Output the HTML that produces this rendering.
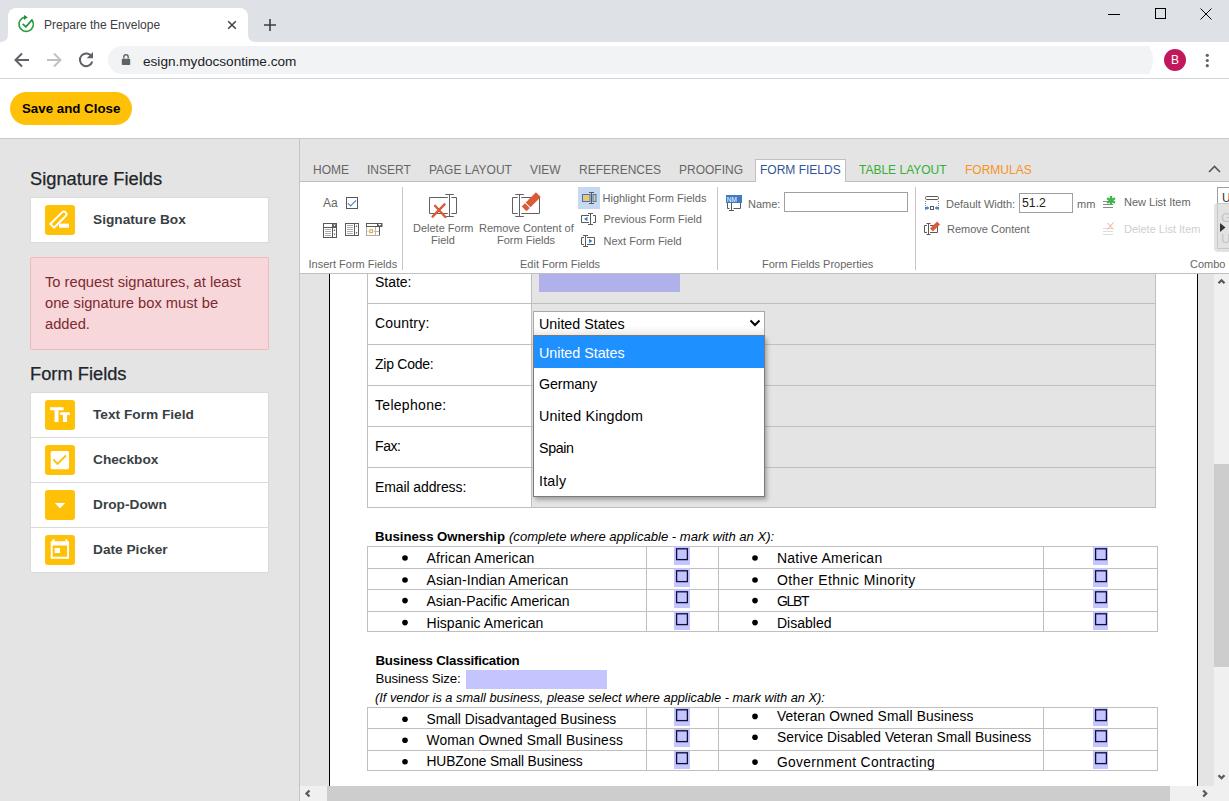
<!DOCTYPE html>
<html><head><meta charset="utf-8">
<style>
*{box-sizing:border-box;margin:0;padding:0}
html,body{width:1229px;height:801px;overflow:hidden;background:#fff;font-family:"Liberation Sans",sans-serif}
.a{position:absolute}
.t{position:absolute;white-space:nowrap;line-height:1}
/* chrome */
#tabbar{left:0;top:0;width:1229px;height:42px;background:#dee1e6}
#tab{left:8px;top:8px;width:240px;height:34px;background:#fff;border-radius:8px 8px 0 0}
#addr{left:0;top:42px;width:1229px;height:36px;background:#fff}
#pill{left:108px;top:46px;width:1042px;height:28px;background:#f1f3f4;border-radius:14px 0 0 14px}
#sep1{left:0;top:78px;width:1229px;height:1px;background:#d3d5d8}
#hdr{left:0;top:79px;width:1229px;height:59px;background:#fff}
#sep2{left:0;top:138px;width:1229px;height:1px;background:#c8c8c8}
#save{left:10px;top:92px;width:122px;height:33px;background:#ffc107;border-radius:17px;font-weight:bold;font-size:13.3px;color:#000}
/* sidebar */
#side{left:0;top:139px;width:299px;height:662px;background:#e4e4e4}
#sideb{left:299px;top:139px;width:1px;height:662px;background:#c4c4c4}
.h{font-size:18.3px;color:#212529;-webkit-text-stroke:0.25px #212529}
.card{left:30px;width:239px;background:#fff;border:1px solid #dadada}
.item{position:absolute;left:0;width:237px;height:45px;border-top:1px solid #dadada}
.ico{position:absolute;left:14px;top:7px;width:30px;height:30px;background:#ffc107;border-radius:3px}
.lbl{position:absolute;left:62px;top:15px;font-weight:bold;font-size:13.7px;color:#3a3f45;white-space:nowrap;line-height:1}
#alert{left:30px;top:257px;width:239px;height:93px;background:#f8d7da;border:1px solid #f1b8bd;border-radius:2px}
#alert p{position:absolute;left:14px;top:14px;font-size:14.7px;line-height:21px;color:#7b2a30;width:220px}
/* ribbon */
#rtabs{left:300px;top:139px;width:929px;height:43px;background:#e4e4e4;border-bottom:1px solid #c0c0c0}
.rt{position:absolute;top:163px;font-size:12px;color:#666;line-height:1;white-space:nowrap}
#ractive{left:755px;top:159px;width:91px;height:24px;background:#fff;border:1px solid #c0c0c0;border-bottom:none}
#rbody{left:300px;top:182px;width:929px;height:92px;background:#fff;border-bottom:1px solid #c0c0c0}
.vs{position:absolute;top:187px;width:1px;height:83px;background:#c6c6c6}
.rl{position:absolute;font-size:11px;color:#666;line-height:1;white-space:nowrap}
/* doc */
#doc{left:300px;top:274px;width:914px;height:512px;background:#e4e4e4;overflow:hidden}
#page{left:329px;top:274px;width:869px;height:512px;background:#fff;border-left:1px solid #000;border-right:1px solid #000}
#vsb{left:1214px;top:274px;width:15px;height:527px;background:#f0f0f0}
#hsb{left:300px;top:786px;width:914px;height:15px;background:#f0f0f0}
.d{position:absolute;font-size:14px;color:#000;line-height:1;white-space:nowrap}
</style></head><body>
<div id="tabbar" class="a"></div>
<div id="tab" class="a"></div>
<svg class="a" style="left:0;top:0" width="300" height="42">
<path d="M0 42 Q8 42 8 34 L8 42 Z" fill="#fff"/>
<path d="M248 34 Q248 42 256 42 L248 42 Z" fill="#fff"/>
<g fill="none" stroke="#2ea043" stroke-width="1.7" stroke-linecap="round">
<path d="M25 17.1 A7.2 7.2 0 1 0 32.4 20.6"/>
<path d="M23.2 24.4 L25.9 26.8 L31.9 20" stroke="#1f8f3a" stroke-width="1.8"/>
</g>
<path d="M24 14.9 L27.8 17.2 L24 19.9 Z" fill="#1f8f3a"/>
<g stroke="#3c4043" stroke-width="1.5" stroke-linecap="butt">
<path d="M228.2 21.2 L235.8 28.8 M235.8 21.2 L228.2 28.8"/>
<path d="M270 19 L270 31 M264 25 L276 25" stroke-width="1.6"/>
</g>
</svg>
<span class="t" style="left:44px;top:19px;font-size:12px;color:#3c4043">Prepare the Envelope</span>
<svg class="a" style="left:1090px;top:0" width="139" height="42">
<g stroke="#000" stroke-width="1" fill="none">
<path d="M1108 14.5 L1120 14.5" transform="translate(-1090 0)"/>
<rect x="65.5" y="8.5" width="10" height="10" transform="translate(0 0)"/>
<path d="M110.5 8.5 L121.5 19.5 M121.5 8.5 L110.5 19.5"/>
</g>
</svg>
<div id="addr" class="a"></div>
<div id="pill" class="a"></div>
<div class="a" style="left:1146px;top:49px;width:7px;height:22px;background:#f1f3f4;border-radius:0 50% 50% 0/0 50% 50% 0"></div>
<svg class="a" style="left:0;top:42px" width="150" height="36">
<g fill="none" stroke="#5f6368" stroke-width="2" stroke-linecap="butt">
<path d="M29 18 L16 18 M22 11.5 L15.5 18 L22 24.5"/>
<path d="M47 18 L60 18 M54 11.5 L60.5 18 L54 24.5" stroke="#bec1c5"/>
<path d="M91.6 14.5 A6.3 6.3 0 1 0 92.3 19.5"/>
</g>
<path d="M93 10 L93 16.3 L86.7 16.3 Z" fill="#5f6368"/>
<rect x="121.8" y="16.8" width="8.4" height="6.2" rx="0.8" fill="#5f6368"/>
<path d="M123.8 16.5 L123.8 15 A2.2 2.2 0 0 1 128.2 15 L128.2 16.5" fill="none" stroke="#5f6368" stroke-width="1.4"/>
</svg>
<span class="t" style="left:143px;top:55px;font-size:13.6px;color:#202124">esign.mydocsontime.com</span>
<svg class="a" style="left:1150px;top:42px" width="79" height="36">
<circle cx="25" cy="18" r="11" fill="#c2185b"/>
<circle cx="57.3" cy="13.3" r="1.6" fill="#5f6368"/>
<circle cx="57.3" cy="18.5" r="1.6" fill="#5f6368"/>
<circle cx="57.3" cy="23.7" r="1.6" fill="#5f6368"/>
</svg>
<span class="t" style="left:1171px;top:54px;font-size:12px;color:#fff">B</span>
<div id="sep1" class="a"></div>
<div id="hdr" class="a"></div>
<div id="sep2" class="a"></div>
<div id="save" class="a"><span class="t" style="left:12px;top:10px">Save and Close</span></div>

<div id="side" class="a"></div>
<div id="sideb" class="a"></div>
<span class="t h" style="left:30px;top:170px">Signature Fields</span>
<div class="a card" style="top:197px;height:46px">
 <div class="item" style="top:0;border-top:none">
  <div class="ico"><svg width="30" height="30"><g transform="translate(13.2 14.8) rotate(-45)"><path d="M-8.5 -2.6 L8 -2.6 A2.6 2.6 0 0 1 8 2.6 L-8.5 2.6 Z" fill="none" stroke="#fff" stroke-width="1.9"/></g><rect x="14" y="18.6" width="10" height="4.2" fill="#fff"/></svg></div>
  <span class="lbl">Signature Box</span>
 </div>
</div>
<div id="alert" class="a"><p>To request signatures, at least one signature box must be added.</p></div>
<span class="t h" style="left:30px;top:365px">Form Fields</span>
<div class="a card" style="top:392px;height:181px;border-radius:2px">
 <div class="item" style="top:0;border-top:none">
  <div class="ico"><svg width="30" height="30"><g fill="#fff"><path d="M5.1 7.2 L18.6 7.2 L18.6 10.2 L13.5 10.2 L13.5 22 L9.6 22 L9.6 10.2 L5.1 10.2 Z"/><path d="M15.2 12.2 L24.8 12.2 L24.8 15 L22 15 L22 22 L18 22 L18 15 L15.2 15 Z"/></g></svg></div>
  <span class="lbl">Text Form Field</span>
 </div>
 <div class="item" style="top:44px">
  <div class="ico"><svg width="30" height="30"><rect x="5.7" y="6" width="18.3" height="18.3" rx="1.5" fill="#fff"/><path d="M8.3 14.4 L12.4 18.9 L21 10.5" fill="none" stroke="#ffc107" stroke-width="1.8"/></svg></div>
  <span class="lbl">Checkbox</span>
 </div>
 <div class="item" style="top:89px">
  <div class="ico"><svg width="30" height="30"><path d="M9.8 13 L20.2 13 L15 18.2 Z" fill="#fff"/></svg></div>
  <span class="lbl">Drop-Down</span>
 </div>
 <div class="item" style="top:134px">
  <div class="ico"><svg width="30" height="30"><g fill="#fff"><path d="M5.7 6.2 L7.5 6.2 L7.5 4.2 L9.5 4.2 L9.5 6.2 L20.5 6.2 L20.5 4.2 L22.5 4.2 L22.5 6.2 L24 6.2 L24 23.7 L5.7 23.7 Z M7.6 10.5 L7.6 21.8 L22.1 21.8 L22.1 10.5 Z" fill-rule="evenodd"/><rect x="9.6" y="13" width="5.4" height="5"/></g></svg></div>
  <span class="lbl">Date Picker</span>
 </div>
</div>

<div id="rtabs" class="a"></div>
<div id="ractive" class="a"></div>
<div id="rbody" class="a"></div>
<span class="rt" style="left:313px;top:164px">HOME</span>
<span class="rt" style="left:367px;top:164px">INSERT</span>
<span class="rt" style="left:429px;top:164px">PAGE LAYOUT</span>
<span class="rt" style="left:530px;top:164px">VIEW</span>
<span class="rt" style="left:579px;top:164px">REFERENCES</span>
<span class="rt" style="left:679px;top:164px">PROOFING</span>
<span class="rt" style="left:760px;top:164px;color:#2f5597">FORM FIELDS</span>
<span class="rt" style="left:859px;top:164px;color:#33b035">TABLE LAYOUT</span>
<span class="rt" style="left:965px;top:164px;color:#f7931e">FORMULAS</span>
<svg class="a" style="left:300px;top:139px" width="929" height="135" viewBox="300 139 929 135">
<path d="M1209 172 L1214.5 166.5 L1220 172" fill="none" stroke="#555" stroke-width="1.6"/>
<g fill="#c6c6c6">
<rect x="402" y="187" width="1" height="83"/><rect x="717" y="187" width="1" height="83"/><rect x="915" y="187" width="1" height="83"/>
</g>
<!-- insert form fields icons -->
<g fill="none" stroke="#595959" stroke-width="1">
<rect x="346.5" y="197.5" width="11" height="11"/>
<rect x="323.5" y="223.5" width="13" height="14"/>
<path d="M323.5 227.5 L336.5 227.5 M332.5 223.5 L332.5 237.5"/>
<rect x="345.5" y="223.5" width="13" height="12"/>
<path d="M354.5 223.5 L354.5 235.5"/>
<path d="M366.5 226.5 V235.5 H379.5" stroke-dasharray="1 1"/>
<path d="M379.5 226.5 V235.5"/>
<rect x="366.5" y="223.5" width="15" height="3"/>
</g>
<path d="M347.8 203.2 L350.6 206 L356 200.3" fill="none" stroke="#4a86c8" stroke-width="1.1"/>
<g stroke="#aaa" stroke-width="1"><path d="M325 229.5 H331 M325 231.5 H331 M325 233.5 H331 M325 235.5 H331"/><path d="M347 225.5 H353 M347 227.5 H353 M347 229.5 H353 M347 231.5 H353 M347 233.5 H353"/><path d="M375.5 227 V235 M374 231.5 H379" stroke="#b8b8b8"/><path d="M366.5 231.5 H369" stroke="#b8b8b8" stroke-dasharray="1 1"/></g>
<rect x="332.5" y="223.5" width="4" height="4" fill="#595959"/>
<path d="M333.3 224.6 L335.7 224.6 L334.5 226.5 Z" fill="#fff"/>
<path d="M333.5 231 L334.5 229 L335.5 231 Z M333.5 233.5 L335.5 233.5 L334.5 235.5 Z M355.5 227 L356.5 225 L357.5 227Z M355.5 232 L357.5 232 L356.5 234Z" fill="#777"/>
<rect x="377" y="223" width="5.5" height="4" fill="#595959"/>
<path d="M378 224 L381.5 224 L379.75 226 Z" fill="#fff"/>
<rect x="369.8" y="229.8" width="2.8" height="2.8" fill="none" stroke="#e8a93a" stroke-width="1.1"/>
<!-- delete form field -->
<g fill="none" stroke="#616161" stroke-width="1">
<path d="M447.8 197.5 L429.5 197.5 L429.5 213.5 L447.8 213.5 M451.4 197.5 L456.5 197.5 L456.5 213.5 L451.4 213.5 M449.5 194.5 L449.5 216.5 M445.3 194.5 H453.8 M445.3 216.5 H453.8"/>
<path d="M517.7 197.5 L512.5 197.5 L512.5 213.5 L517.7 213.5 M521.3 197.5 L539.5 197.5 L539.5 213.5 L521.3 213.5 M519.5 194.5 L519.5 216.5 M515.3 194.5 H523.8 M515.3 216.5 H523.8"/>
</g>
<path d="M435 205.8 L445.3 217 M444.5 204.3 L432.6 216.6" stroke="#d95b38" stroke-width="2.4" stroke-linecap="round"/>
<g transform="translate(531.2 201.8) rotate(-45)"><rect x="-10" y="-3.4" width="4.6" height="6.8" fill="#d95b38"/><rect x="-4.4" y="-3.4" width="14.5" height="6.8" fill="#d95b38"/></g>
<!-- highlight etc -->
<rect x="578" y="187" width="22" height="22" fill="#c6d9f1"/>
<rect x="582.5" y="194.5" width="7.5" height="7" fill="#f1c46e" stroke="#3c78c0" stroke-width="1"/>
<rect x="593" y="194.5" width="3" height="7" fill="#f1c46e" stroke="#3c78c0" stroke-width="1"/>
<g fill="none" stroke="#595959" stroke-width="1">
<path d="M591.5 192.5 V203.5 M589 192.5 H594 M589 203.5 H594"/>
<path d="M589 215.5 H581.5 V222.5 H589 M593 215.5 H595.5 V222.5 H593 M590.5 213.5 V224.5 M588 213.5 H593 M588 224.5 H593"/>
<path d="M584 237.5 H581.5 V244.5 H584 M587 237.5 H594.5 V244.5 H587 M585.5 235.5 V246.5 M583 235.5 H588 M583 246.5 H588"/>
</g>
<path d="M587.5 216.8 L584 219 L587.5 221.2 Z M589 238.8 L592.5 241 L589 243.2 Z" fill="#3c7cc4"/>
<!-- NM -->
<rect x="726" y="195" width="16" height="8" fill="#3c7cc4"/>
<text x="726.8" y="202.2" font-family="Liberation Sans" font-size="7.5" fill="#fff" textLength="10" lengthAdjust="spacingAndGlyphs">NM</text>
<g fill="none" stroke="#595959" stroke-width="1"><path d="M727.5 203 V208.5 H729.5 M733.5 208.5 H740.5 V203 M731.5 203 V210.5 M729 210.5 H734"/></g>
<rect x="784.5" y="192.5" width="123" height="19" fill="#fff" stroke="#a0a0a0"/>
<!-- default width -->
<rect x="925.5" y="196.5" width="13" height="3" rx="1.2" fill="none" stroke="#595959"/>
<path d="M925.5 201 V211 M938.5 201 V211" stroke="#888" stroke-width="1" stroke-dasharray="1 1"/>
<path d="M925 208 H929 M935 208 H939" stroke="#3c7cc4" stroke-width="1.4"/>
<path d="M925 208 L927.5 206 V210Z M939 208 L936.5 206 V210Z" fill="#3c7cc4"/>
<rect x="930.5" y="206.5" width="3" height="3" fill="none" stroke="#595959"/>
<rect x="1019.5" y="193.5" width="53" height="19" fill="#fff" stroke="#a0a0a0"/>
<g fill="none" stroke="#595959" stroke-width="1"><path d="M927 225.5 H924.5 V232.5 H927 M930 225.5 H937.5 V232.5 H930 M928.5 223.5 V234.5 M926.5 223.5 H930.5 M926.5 234.5 H930.5"/></g>
<g transform="translate(935 226.5) rotate(-45)"><rect x="-5" y="-2" width="10" height="4" fill="#d95b38"/></g>
<!-- list items -->
<g stroke="#8a8a8a" stroke-width="1"><path d="M1103 201.5 H1113 M1103 204.5 H1113 M1103 207.5 H1113"/></g>
<g stroke="#3cb648" stroke-width="2.3"><path d="M1111 196 V205 M1107.1 198.25 L1114.9 202.75 M1107.1 202.75 L1114.9 198.25"/></g>
<g stroke="#dcdcdc" stroke-width="1"><path d="M1103 228.5 H1113 M1103 231.5 H1113 M1103 234.5 H1113"/></g>
<path d="M1107.5 229.5 L1113.5 222.5 M1107.5 223 L1113.5 229.5" stroke="#f0b8a8" stroke-width="1.1"/>
<rect x="1217.5" y="187.5" width="14" height="20" fill="#fff" stroke="#a0a0a0"/>
<rect x="1214" y="203" width="20" height="49" rx="4" fill="#e2e2e2"/>
<rect x="1217.5" y="203.5" width="14" height="45" fill="none" stroke="#c8c8c8"/>
<path d="M1220 223 L1225.5 227.5 L1220 232 Z" fill="#333"/>
</svg>
<span class="rl" style="left:323px;top:196.5px;font-size:12px;color:#666">Aa</span>
<span class="rl" style="left:413px;top:222.7px">Delete Form</span>
<span class="rl" style="left:431px;top:234.7px">Field</span>
<span class="rl" style="left:479px;top:222.7px">Remove Content of</span>
<span class="rl" style="left:497px;top:234.7px">Form Fields</span>
<span class="rl" style="left:602.5px;top:193.2px">Highlight Form Fields</span>
<span class="rl" style="left:603.5px;top:214.3px">Previous Form Field</span>
<span class="rl" style="left:603.5px;top:236.2px">Next Form Field</span>
<span class="rl" style="left:748px;top:198.6px">Name:</span>
<span class="rl" style="left:946px;top:198.5px">Default Width:</span>
<span class="rl" style="left:1022px;top:197px;font-size:12.3px;color:#222">51.2</span>
<span class="rl" style="left:1077px;top:198.5px">mm</span>
<span class="rl" style="left:947px;top:223.7px">Remove Content</span>
<span class="rl" style="left:1124px;top:196.6px">New List Item</span>
<span class="rl" style="left:1124px;top:223.5px;color:#cfcfcf">Delete List Item</span>
<span class="rl" style="left:1222px;top:192px;font-size:12px;color:#333">U</span>
<span class="rl" style="left:1221px;top:210.5px;font-size:13.5px;color:#c4c4c4">G</span>
<span class="rl" style="left:1221px;top:232px;font-size:13px;color:#c4c4c4">U</span>
<span class="rl" style="left:308.5px;top:258.5px">Insert Form Fields</span>
<span class="rl" style="left:520px;top:258.5px">Edit Form Fields</span>
<span class="rl" style="left:762px;top:258.5px">Form Fields Properties</span>
<span class="rl" style="left:1190px;top:258.5px">Combo Box</span>

<div id="doc" class="a"></div>
<div id="page" class="a"></div>
<svg class="a" style="left:300px;top:274px" width="914" height="512" viewBox="300 274 914 512">
<!-- table 1 -->
<rect x="532" y="274" width="624" height="234" fill="#e4e4e4"/>
<g fill="#bfbfbf">
<rect x="367" y="274" width="1" height="234"/><rect x="531" y="274" width="1" height="234"/><rect x="1155" y="274" width="1" height="234"/>
<rect x="367" y="303" width="789" height="1"/><rect x="367" y="344" width="789" height="1"/><rect x="367" y="385" width="789" height="1"/>
<rect x="367" y="426" width="789" height="1"/><rect x="367" y="467" width="789" height="1"/><rect x="367" y="507" width="789" height="1"/>
</g>
<rect x="539" y="274" width="141" height="18" fill="#b0b0ea"/>
<!-- table 2 -->
<g fill="#bfbfbf">
<rect x="367" y="546" width="791" height="1"/><rect x="367" y="568" width="791" height="1"/><rect x="367" y="589" width="791" height="1"/><rect x="367" y="611" width="791" height="1"/><rect x="367" y="631" width="791" height="1"/>
<rect x="367" y="546" width="1" height="86"/><rect x="646" y="546" width="1" height="86"/><rect x="718" y="546" width="1" height="86"/><rect x="1043" y="546" width="1" height="86"/><rect x="1157" y="546" width="1" height="86"/>
</g>
<g fill="#c4c4ff">
<rect x="674" y="546" width="16" height="19"/><rect x="674" y="568" width="16" height="19"/><rect x="674" y="589" width="16" height="19"/><rect x="674" y="611" width="16" height="19"/>
<rect x="1093" y="546" width="15" height="19"/><rect x="1093" y="568" width="15" height="19"/><rect x="1093" y="589" width="15" height="19"/><rect x="1093" y="611" width="15" height="19"/>
<rect x="466" y="670" width="141" height="19"/>
<rect x="674" y="707" width="16" height="19"/><rect x="674" y="728" width="16" height="19"/><rect x="674" y="750" width="16" height="19"/>
<rect x="1093" y="707" width="15" height="19"/><rect x="1093" y="728" width="15" height="19"/><rect x="1093" y="750" width="15" height="19"/>
</g>
<g fill="none" stroke="#0d0d3a" stroke-width="1.3">
<rect x="676.6" y="548.8" width="10.8" height="10.8"/><rect x="676.6" y="570.8" width="10.8" height="10.8"/><rect x="676.6" y="591.8" width="10.8" height="10.8"/><rect x="676.6" y="613.8" width="10.8" height="10.8"/>
<rect x="1095.6" y="548.8" width="10.8" height="10.8"/><rect x="1095.6" y="570.8" width="10.8" height="10.8"/><rect x="1095.6" y="591.8" width="10.8" height="10.8"/><rect x="1095.6" y="613.8" width="10.8" height="10.8"/>
<rect x="676.6" y="709.8" width="10.8" height="10.8"/><rect x="676.6" y="730.8" width="10.8" height="10.8"/><rect x="676.6" y="752.8" width="10.8" height="10.8"/>
<rect x="1095.6" y="709.8" width="10.8" height="10.8"/><rect x="1095.6" y="730.8" width="10.8" height="10.8"/><rect x="1095.6" y="752.8" width="10.8" height="10.8"/>
</g>
<!-- table 3 -->
<g fill="#bfbfbf">
<rect x="367" y="707" width="791" height="1"/><rect x="367" y="728" width="791" height="1"/><rect x="367" y="750" width="791" height="1"/><rect x="367" y="770" width="791" height="1"/>
<rect x="367" y="707" width="1" height="64"/><rect x="646" y="707" width="1" height="64"/><rect x="718" y="707" width="1" height="64"/><rect x="1043" y="707" width="1" height="64"/><rect x="1157" y="707" width="1" height="64"/>
</g>
<g fill="#000">
<circle cx="405" cy="558" r="2.8"/><circle cx="405" cy="580" r="2.8"/><circle cx="405" cy="600.6" r="2.8"/><circle cx="405" cy="622.6" r="2.8"/>
<circle cx="755" cy="558" r="2.8"/><circle cx="755" cy="580" r="2.8"/><circle cx="755" cy="600.6" r="2.8"/><circle cx="755" cy="622.6" r="2.8"/>
<circle cx="405" cy="719.2" r="2.8"/><circle cx="405" cy="740.2" r="2.8"/><circle cx="405" cy="761.7" r="2.8"/>
<circle cx="755" cy="716.4" r="2.8"/><circle cx="755" cy="737.2" r="2.8"/><circle cx="755" cy="762.1" r="2.8"/>
</g>
</svg>
<span class="d" style="left:375px;top:275px;letter-spacing:-0.016px">State:</span>
<span class="d" style="left:375px;top:315.7px;letter-spacing:0.197px">Country:</span>
<span class="d" style="left:375px;top:357px;letter-spacing:-0.256px">Zip Code:</span>
<span class="d" style="left:375px;top:398px;letter-spacing:0.298px">Telephone:</span>
<span class="d" style="left:375px;top:439px;letter-spacing:-0.409px">Fax:</span>
<span class="d" style="left:375px;top:480px;letter-spacing:-0.100px">Email address:</span>
<span class="d" style="left:375px;top:529.8px;font-weight:bold;font-size:13.2px;letter-spacing:-0.025px">Business Ownership</span>
<span class="d" style="left:509px;top:530.2px;font-style:italic;font-size:13.1px;letter-spacing:-0.009px">(complete where applicable - mark with an X):</span>
<span class="d" style="left:426.5px;top:550.8px;letter-spacing:0.136px">African American</span>
<span class="d" style="left:426.5px;top:573px;letter-spacing:0.082px">Asian-Indian American</span>
<span class="d" style="left:426.5px;top:593.5px;letter-spacing:-0.008px">Asian-Pacific American</span>
<span class="d" style="left:426.5px;top:616.2px;letter-spacing:0.051px">Hispanic American</span>
<span class="d" style="left:777px;top:551px;letter-spacing:0.231px">Native American</span>
<span class="d" style="left:777px;top:573px;letter-spacing:0.380px">Other Ethnic Minority</span>
<span class="d" style="left:777px;top:593.6px;letter-spacing:-1.320px">GLBT</span>
<span class="d" style="left:777px;top:615.5px;letter-spacing:0.002px">Disabled</span>
<span class="d" style="left:375.5px;top:653.5px;font-weight:bold;font-size:13.3px;letter-spacing:-0.230px">Business Classification</span>
<span class="d" style="left:375.5px;top:672.2px;font-size:13.3px;letter-spacing:-0.158px">Business Size:</span>
<span class="d" style="left:375px;top:692.2px;font-style:italic;font-size:12.8px;letter-spacing:-0.005px">(If vendor is a small business, please select where applicable - mark with an X):</span>
<span class="d" style="left:426.5px;top:712.9px;font-size:13.8px;letter-spacing:-0.018px">Small Disadvantaged Business</span>
<span class="d" style="left:426.5px;top:733.6px;font-size:13.8px;letter-spacing:0.135px">Woman Owned Small Business</span>
<span class="d" style="left:426.5px;top:755.2px;font-size:13.8px;letter-spacing:-0.120px">HUBZone Small Business</span>
<span class="d" style="left:777px;top:709.8px;font-size:13.8px;letter-spacing:0.119px">Veteran Owned Small Business</span>
<span class="d" style="left:777px;top:730.8px;font-size:13.8px;letter-spacing:0.031px">Service Disabled Veteran Small Business</span>
<span class="d" style="left:777px;top:755.6px;font-size:13.8px;letter-spacing:0.349px">Government Contracting</span>
<!-- select -->
<div class="a" style="left:533px;top:311px;width:232px;height:25px;background:linear-gradient(#fff 60%,#ececec);border:1px solid #a8a8a8"></div>
<span class="d" style="left:539px;top:317px;font-size:14.3px;letter-spacing:-0.019px">United States</span>
<svg class="a" style="left:748px;top:318px" width="14" height="10"><path d="M2.5 2.5 L7 7 L11.5 2.5" fill="none" stroke="#000" stroke-width="2"/></svg>
<div class="a" style="left:533px;top:335px;width:232px;height:162px;background:#fff;border:1px solid #7a7a7a;box-shadow:2px 3px 4px rgba(0,0,0,0.28)"></div>
<div class="a" style="left:534px;top:336px;width:230px;height:32px;background:#1e90ff"></div>
<span class="d" style="left:539px;top:345.5px;font-size:14.3px;color:#fff;letter-spacing:-0.019px">United States</span>
<span class="d" style="left:539px;top:377.4px;font-size:14.3px;letter-spacing:-0.114px">Germany</span>
<span class="d" style="left:539px;top:409.4px;font-size:14.3px;letter-spacing:0.162px">United Kingdom</span>
<span class="d" style="left:539px;top:441.4px;font-size:14.3px;letter-spacing:-0.396px">Spain</span>
<span class="d" style="left:539px;top:473.6px;font-size:14.3px;letter-spacing:0.213px">Italy</span>
<div id="vsb" class="a"></div>
<div id="hsb" class="a"></div>
<div class="a" style="left:327px;top:786px;width:843px;height:15px;background:#cdcdcd"></div>
<div class="a" style="left:1214px;top:464px;width:15px;height:203px;background:#cdcdcd"></div>
<svg class="a" style="left:300px;top:274px" width="929" height="527" viewBox="300 274 929 527">
<g fill="none" stroke="#5a5a5a" stroke-width="2.3">
<path d="M1218.5 283.3 L1221.5 280.3 L1224.5 283.3"/>
<path d="M1218.5 775.2 L1221.5 778.2 L1224.5 775.2"/>
<path d="M309.5 790.5 L306.5 793.5 L309.5 796.5"/>
<path d="M1203.2 790.5 L1206.2 793.5 L1203.2 796.5"/>
</g>
</svg>
</body></html>
